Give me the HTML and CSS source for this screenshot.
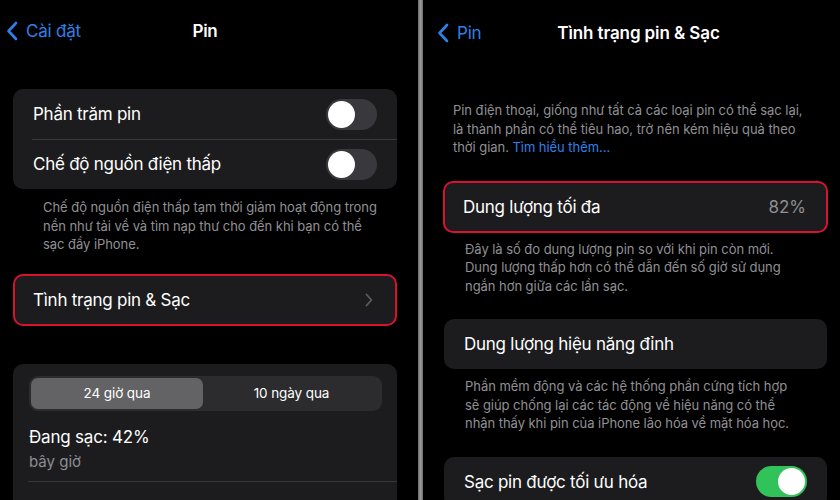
FILE: index.html
```html
<!DOCTYPE html>
<html lang="vi">
<head>
<meta charset="utf-8">
<title>Pin</title>
<link rel="stylesheet" href="styles.css">
</head>
<body>
<div class="screen">
  <section class="panel panel-left">
    <header class="nav nav-left">
      <div class="back">
        <svg class="chev" viewBox="0 0 12 20" width="12" height="20"><path d="M10 2 L2.5 10 L10 18" fill="none" stroke="#2f80e8" stroke-width="2.6" stroke-linecap="round" stroke-linejoin="round"/></svg>
        <span>Cài đặt</span>
      </div>
      <div class="title">Pin</div>
      <div></div>
    </header>

    <div class="card card-l first">
      <div class="row">
        <span class="label">Phần trăm pin</span>
        <span class="toggle"><span class="knob"></span></span>
      </div>
      <div class="row sep">
        <span class="label">Chế độ nguồn điện thấp</span>
        <span class="toggle"><span class="knob"></span></span>
      </div>
    </div>
    <p class="foot foot-l1">Chế độ nguồn điện thấp tạm thời giảm hoạt động trong<br>nền như tải về và tìm nạp thư cho đến khi bạn có thể<br>sạc đầy iPhone.</p>

    <div class="card card-l red red-l">
      <div class="row">
        <span class="label">Tình trạng pin &amp; Sạc</span>
        <svg class="disclosure" viewBox="0 0 8 14" width="8" height="14"><path d="M1.5 1.5 L6.5 7 L1.5 12.5" fill="none" stroke="#5c5c60" stroke-width="1.8" stroke-linecap="round" stroke-linejoin="round"/></svg>
      </div>
    </div>

    <div class="card card-l usage">
      <div class="seg">
        <div class="seg-item active">24 giờ qua</div>
        <div class="seg-item">10 ngày qua</div>
      </div>
      <div class="charge">Đang sạc: 42%</div>
      <div class="now">bây giờ</div>
      <div class="hr"></div>
    </div>
  </section>

  <div class="divider"></div>

  <section class="panel panel-right">
    <header class="nav nav-right">
      <div class="back">
        <svg class="chev" viewBox="0 0 12 20" width="12" height="20"><path d="M10 2 L2.5 10 L10 18" fill="none" stroke="#2f80e8" stroke-width="2.6" stroke-linecap="round" stroke-linejoin="round"/></svg>
        <span>Pin</span>
      </div>
      <div class="title">Tình trạng pin &amp; Sạc</div>
      <div></div>
    </header>

    <p class="foot foot-r0">Pin điện thoại, giống như tất cả các loại pin có thể sạc lại,<br>là thành phần có thể tiêu hao, trở nên kém hiệu quả theo<br>thời gian. <span class="link">Tìm hiểu thêm...</span></p>

    <div class="card card-r red red-r">
      <div class="row">
        <span class="label">Dung lượng tối đa</span>
        <span class="value">82%</span>
      </div>
    </div>
    <p class="foot foot-r">Đây là số đo dung lượng pin so với khi pin còn mới.<br>Dung lượng thấp hơn có thể dẫn đến số giờ sử dụng<br>ngắn hơn giữa các lần sạc.</p>

    <div class="card card-r peak">
      <div class="row">
        <span class="label">Dung lượng hiệu năng đỉnh</span>
      </div>
    </div>
    <p class="foot foot-r foot-r2">Phần mềm động và các hệ thống phần cứng tích hợp<br>sẽ giúp chống lại các tác động về hiệu năng có thể<br>nhận thấy khi pin của iPhone lão hóa về mặt hóa học.</p>

    <div class="card card-r opt">
      <div class="row">
        <span class="label">Sạc pin được tối ưu hóa</span>
        <span class="toggle on"><span class="knob"></span></span>
      </div>
    </div>
  </section>
</div>
</body>
</html>
```

FILE: styles.css
```css
* { box-sizing: border-box; }
html, body { margin: 0; padding: 0; background: #000; }
body {
  font-family: Inter, "Liberation Sans", Arial, sans-serif;
  color: #fff;
  width: 840px;
  height: 500px;
  overflow: hidden;
}
.screen {
  display: flex;
  width: 840px;
  height: 500px;
  overflow: hidden;
}
.panel { overflow: hidden; height: 500px; }
.panel-left { width: 418px; flex: none; }
.panel-right { flex: 1; }
.divider {
  width: 5px;
  flex: none;
  background: linear-gradient(90deg, #6e6e6e, #9a9a9a 50%, #6e6e6e);
}

/* nav */
.nav {
  display: grid;
  grid-template-columns: 1fr auto 1fr;
  align-items: center;
}
.nav-left { height: 62px; padding: 0 14px 0 6px; }
.nav-right { height: 66px; padding: 0 0 0 14px; }
.back {
  display: flex;
  align-items: center;
  gap: 8px;
  color: #2f80e8;
  font-size: 17px;
  letter-spacing: -0.2px;
}
.chev { display: block; }
.title {
  font-size: 17px;
  font-weight: 600;
  letter-spacing: -0.3px;
}
.nav-right .title { letter-spacing: -0.1px; }

/* cards */
.card {
  background: #1c1c1e;
  border-radius: 10px;
}
.card-l { margin: 0 21px 0 13px; }
.card-r { margin: 0 12px 0 20px; }
.first { margin-top: 27px; }
.row {
  height: 50px;
  display: flex;
  align-items: center;
  justify-content: space-between;
  padding: 0 20px;
  position: relative;
}
.label {
  font-size: 17px;
  letter-spacing: -0.25px;
}
.row.sep::before {
  content: "";
  position: absolute;
  left: 19px;
  right: 0;
  top: 0;
  height: 1px;
  background: #3a3a3c;
}

/* toggles */
.toggle {
  width: 51px;
  height: 31px;
  border-radius: 16px;
  background: #39393d;
  padding: 2px;
  display: flex;
  flex: none;
}
.knob {
  width: 27px;
  height: 27px;
  border-radius: 50%;
  background: #fff;
}
.toggle.on { background: #31c35a; justify-content: flex-end; }

/* red highlight */
.red { border: 2px solid #d8132d; }
.red .row { height: 48px; padding: 0 18px; }
.red-l { margin-top: 20px; }
.red-l .row { padding-right: 22px; }
.red-r { margin-top: 24px; }
.red-r .row { padding-right: 20px; }
.disclosure { display: block; }
.value {
  color: #8e8e93;
  font-size: 17px;
}

/* footers */
.foot {
  margin: 0;
  color: #909095;
  font-size: 13px;
  line-height: 18.5px;
  letter-spacing: -0.05px;
}
.foot-l1 { margin-top: 9px; padding-left: 43px; }
.foot-r0 { margin-top: 35px; padding-left: 30px; }
.foot-r { margin-top: 7px; padding-left: 42px; }
.foot-r2 { margin-top: 8px; }
.link { color: #2f80e8; }
.peak { margin-top: 24px; margin-right: 13px; margin-left: 21px; }
.opt { margin-top: 24px; margin-right: 13px; margin-left: 21px; }

/* usage card */
.usage { margin-top: 38px; padding: 12px 0 0 16px; height: 200px; }
.seg {
  display: flex;
  height: 35px;
  margin-right: 15px;
  padding: 2px;
  border-radius: 9px;
  background: #2c2c2e;
}
.seg-item {
  flex: 1;
  display: flex;
  align-items: center;
  justify-content: center;
  font-size: 13.5px;
  border-radius: 7px;
  letter-spacing: -0.1px;
}
.seg-item.active { background: #636366; flex: 0 0 172px; }
.charge {
  margin-top: 15px;
  font-size: 17px;
  line-height: 22px;
  letter-spacing: -0.2px;
}
.now {
  margin-top: 4px;
  color: #8d8d92;
  font-size: 15px;
  line-height: 20px;
}
.hr {
  margin-top: 9px;
  height: 1px;
  background: #38383a;
  margin-left: -1px;
}
```
